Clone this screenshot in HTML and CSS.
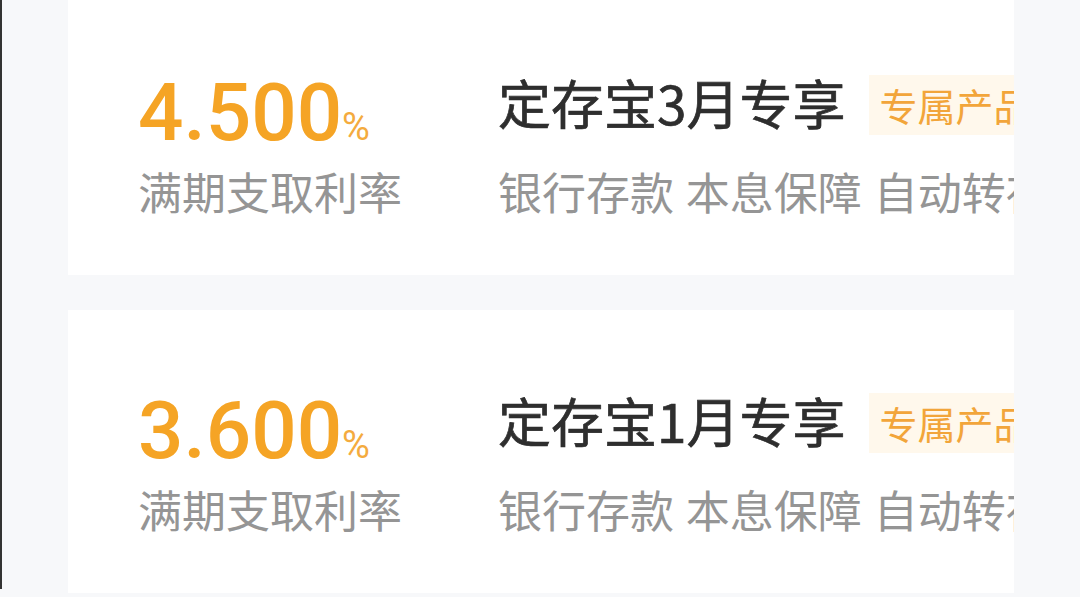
FILE: index.html
```html
<!DOCTYPE html>
<html lang="zh-CN">
<head>
    <meta charset="UTF-8">
    <meta name="viewport" content="width=device-width, initial-scale=1.0">
    <title>定存宝</title>
    <link rel="stylesheet" href="styles.css">
</head>
<body>
    <div class="page">
        <div class="product-list">
            <!-- 3月 -->
            <div class="product-card">
                <div class="rate-col">
                    <div class="rate">4.500<span class="pct">%</span></div>
                    <div class="rate-label">满期支取利率</div>
                </div>
                <div class="info-col">
                    <div class="title-row">
                        <span class="title">定存宝3月专享</span>
                        <span class="tag">专属产品</span>
                    </div>
                    <div class="desc">银行存款 本息保障 自动转存</div>
                </div>
            </div>

            <!-- 1月 -->
            <div class="product-card">
                <div class="rate-col">
                    <div class="rate">3.600<span class="pct">%</span></div>
                    <div class="rate-label">满期支取利率</div>
                </div>
                <div class="info-col">
                    <div class="title-row">
                        <span class="title">定存宝1月专享</span>
                        <span class="tag">专属产品</span>
                    </div>
                    <div class="desc">银行存款 本息保障 自动转存</div>
                </div>
            </div>
        </div>
    </div>
</body>
</html>
```

FILE: styles.css
```css
* {
    margin: 0;
    padding: 0;
    box-sizing: border-box;
}

body {
    font-family: "Noto Sans CJK SC", "Noto Sans", sans-serif;
    background: #f7f8fa;
    height: 100vh;
    overflow: hidden;
}

.page {
    height: 100vh;
    border-left: 2px solid #333;
    padding: 0 66px;
}

.product-list {
    display: flex;
    flex-direction: column;
    gap: 35px;
    margin-top: -8px;
}

.product-card {
    display: flex;
    align-items: flex-start;
    height: 283px;
    background: #fff;
    padding: 80px 0 0 70px;
    overflow: hidden;
}

.rate-col {
    flex: 0 0 360px;
}

.rate {
    font-family: Roboto, "Liberation Sans", sans-serif;
    font-weight: 500;
    font-size: 80px;
    line-height: 82px;
    color: #f5a425;
    white-space: nowrap;
}

.pct {
    font-size: 38px;
    font-weight: 400;
    color: #f4ab3e;
}

.rate-label {
    margin-top: 1px;
    font-size: 44px;
    line-height: 44px;
    color: #959595;
}

.info-col {
    flex: 0 0 auto;
    white-space: nowrap;
}

.title-row {
    display: flex;
    align-items: flex-start;
    gap: 24px;
}

.title {
    font-size: 53px;
    line-height: 60px;
    font-weight: 400;
    color: #2e2e2e;
    -webkit-text-stroke: 0.7px #2e2e2e;
}

.tag {
    margin-top: 3px;
    height: 60px;
    line-height: 60px;
    padding: 0 10px;
    background: #fff8ec;
    color: #f2a53a;
    font-size: 38px;
}

.desc {
    margin-top: 35px;
    font-size: 44px;
    line-height: 43px;
    word-spacing: 2px;
    color: #959595;
}
```
